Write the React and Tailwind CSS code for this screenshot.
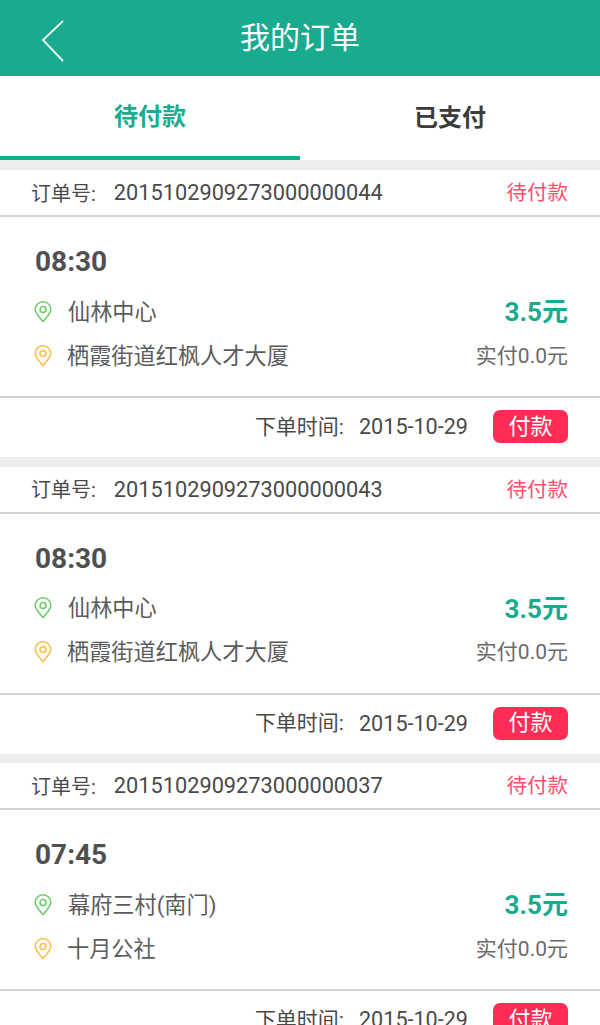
const orders = [
  { id: "2015102909273000000044", time: "08:30", from: "仙林中心", to: "栖霞街道红枫人才大厦" },
  { id: "2015102909273000000043", time: "08:30", from: "仙林中心", to: "栖霞街道红枫人才大厦" },
  { id: "2015102909273000000037", time: "07:45", from: "幕府三村(南门)", to: "十月公社" },
];

function Pin({ color }) {
  return (
    <svg width="18" height="22" viewBox="0 0 18 22" fill="none" stroke={color} strokeWidth="1.5" className="shrink-0">
      <path d="M9 20.5C5 15.8 1.2 12.4 1.2 8.6a7.8 7.8 0 0 1 15.6 0C16.8 12.4 13 15.8 9 20.5Z" />
      <circle cx="9" cy="8.6" r="3" />
    </svg>
  );
}

function Order({ o }) {
  return (
    <div className="mb-[9.5px]">
      <div className="h-[47px] bg-white border-b-2 border-[#d4d4d4] pl-[31px] pr-[32px] pt-[2px] flex items-center justify-between text-[20px] text-[#4a4a4a]">
        <div className="flex items-center">
          <span>订单号:</span>
          <span className="ml-[18px] text-[21.75px]">{o.id}</span>
        </div>
        <span className="text-[#ff4d6d] text-[20.5px]">待付款</span>
      </div>
      <div className="h-[181px] bg-white border-b-2 border-[#d4d4d4] pl-[34px] pr-[32px] flex flex-col">
        <div className="mt-[27px] h-[36px] pl-[1px] flex items-center text-[28px] font-bold text-[#505050]">{o.time}</div>
        <div className="mt-[10px] h-[44px] flex items-center justify-between">
          <div className="flex items-center gap-[16px]">
            <Pin color="#66cc66" />
            <span className="text-[22.2px] leading-none text-[#5c5c5c]">{o.from}</span>
          </div>
          <span className="text-[26px] font-bold text-[#18ab8e] leading-none">3.5元</span>
        </div>
        <div className="h-[44px] flex items-center justify-between">
          <div className="flex items-center gap-[15px]">
            <Pin color="#ffbb44" />
            <span className="text-[22.2px] leading-none text-[#5c5c5c]">{o.to}</span>
          </div>
          <span className="text-[21px] leading-none text-[#6a6a6a]">实付0.0元</span>
        </div>
      </div>
      <div className="h-[59px] bg-white pr-[32px] flex items-center justify-end text-[#4a4a4a]">
        <span className="text-[21px]">下单时间:</span>
        <span className="ml-[15px] text-[21.6px]">2015-10-29</span>
        <span className="ml-[25px] mb-[2px] w-[75px] h-[33px] rounded-[7px] bg-[#ff2d55] text-white text-[22px] flex items-center justify-center leading-none">付款</span>
      </div>
    </div>
  );
}

export default function App() {
  return (
    <div className="w-[600px] h-[1025px] overflow-hidden bg-[#eeeeee] font-['Roboto','Noto_Sans_CJK_SC',sans-serif]">
      <header className="h-[76px] bg-[#18ab8e] relative flex items-center justify-center">
        <svg width="24" height="46" viewBox="0 0 24 46" fill="none" stroke="#e4f3ef" strokeWidth="2" className="absolute left-[41px] top-[19px]">
          <path d="M22 2 2 21l20 21" />
        </svg>
        <span className="text-[30px] text-white leading-none">我的订单</span>
      </header>
      <nav className="h-[84px] bg-white flex mb-[10px]">
        <div className="w-1/2 border-b-4 border-[#18ab8e] pt-[2px] flex items-center justify-center text-[24px] font-bold text-[#21ab8e]">待付款</div>
        <div className="w-1/2 flex items-center justify-center text-[24px] font-bold text-[#3c3c3c]">已支付</div>
      </nav>
      {orders.map((o) => (
        <Order key={o.id} o={o} />
      ))}
    </div>
  );
}
